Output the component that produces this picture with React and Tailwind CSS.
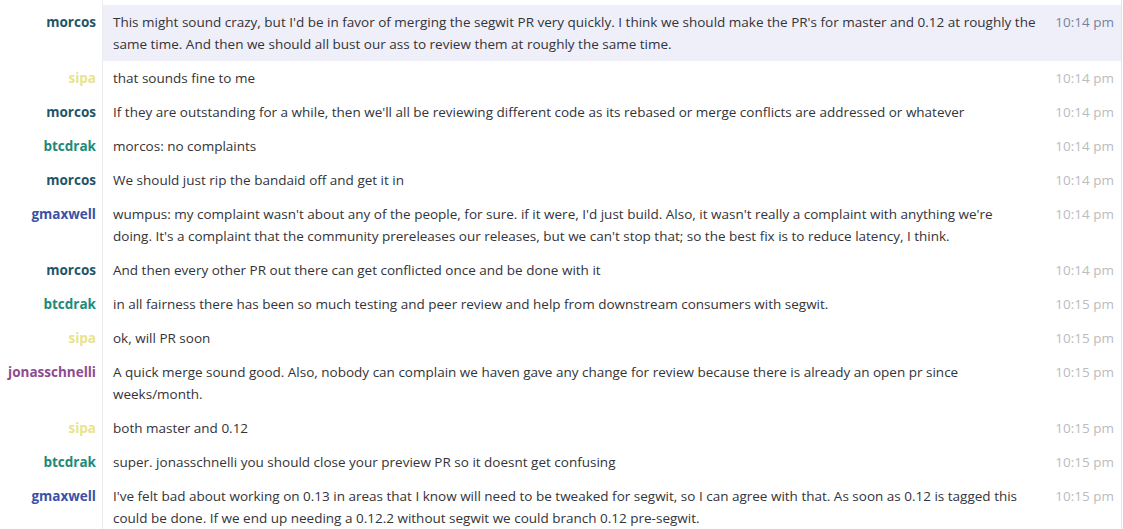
import React from "react";

const NAME_COLORS = {
  morcos: "text-[#1f5568]",
  sipa: "text-[#e8e48c]",
  btcdrak: "text-[#21897a]",
  gmaxwell: "text-[#3a52a6]",
  jonasschnelli: "text-[#8d4b92]",
};

const MESSAGES = [
  { nick: "morcos", time: "10:14 pm", hl: true, text: "This might sound crazy, but I'd be in favor of merging the segwit PR very quickly. I think we should make the PR's for master and 0.12 at roughly the same time. And then we should all bust our ass to review them at roughly the same time." },
  { nick: "sipa", time: "10:14 pm", text: "that sounds fine to me" },
  { nick: "morcos", time: "10:14 pm", text: "If they are outstanding for a while, then we'll all be reviewing different code as its rebased or merge conflicts are addressed or whatever" },
  { nick: "btcdrak", time: "10:14 pm", text: "morcos: no complaints" },
  { nick: "morcos", time: "10:14 pm", text: "We should just rip the bandaid off and get it in" },
  { nick: "gmaxwell", time: "10:14 pm", text: ["wumpus: my complaint wasn't about any of the people, for sure. if it were, I'd just build. Also, it wasn't really a complaint with anything we're", "doing. It's a complaint that the community prereleases our releases, but we can't stop that; so the best fix is to reduce latency, I think."] },
  { nick: "morcos", time: "10:14 pm", text: "And then every other PR out there can get conflicted once and be done with it" },
  { nick: "btcdrak", time: "10:15 pm", text: "in all fairness there has been so much testing and peer review and help from downstream consumers with segwit." },
  { nick: "sipa", time: "10:15 pm", text: "ok, will PR soon" },
  { nick: "jonasschnelli", time: "10:15 pm", text: "A quick merge sound good. Also, nobody can complain we haven gave any change for review because there is already an open pr since weeks/month." },
  { nick: "sipa", time: "10:15 pm", text: "both master and 0.12" },
  { nick: "btcdrak", time: "10:15 pm", text: "super. jonasschnelli you should close your preview PR so it doesnt get confusing" },
  { nick: "gmaxwell", time: "10:15 pm", text: "I've felt bad about working on 0.13 in areas that I know will need to be tweaked for segwit, so I can agree with that. As soon as 0.12 is tagged this could be done. If we end up needing a 0.12.2 without segwit we could branch 0.12 pre-segwit." },
];

function Row({ nick, time, text, hl }) {
  const lines = Array.isArray(text) ? text : [text];
  return (
    <div className={`flex ${hl ? "bg-[#efeff9]" : ""}`}>
      <div className={`w-[103px] shrink-0 border-r border-[#ececec] pr-[6px] py-[6px] text-right font-bold ${NAME_COLORS[nick]} ${hl ? "bg-white" : ""}`}>
        {nick}
      </div>
      <div className="flex-1 min-w-0 pl-[10px] py-[6px] text-[#333338]">
        {lines.map((l, i) => (
          <React.Fragment key={i}>
            {i > 0 && <br />}
            {l}
          </React.Fragment>
        ))}
      </div>
      <div className={`w-[80px] shrink-0 py-[6px] pr-[7px] text-right ${hl ? "text-[#76849a]" : "text-[#bcbcbc]"}`}>
        {time}
      </div>
    </div>
  );
}

export default function App() {
  return (
    <div className="w-[1122px] h-[529px] overflow-hidden bg-white border-r border-[#e4e4e4] text-[13.5px] leading-[22px]" style={{ fontFamily: '"Open Sans", "Noto Sans", sans-serif' }}>
      <div className="flex h-[5px]">
        <div className="w-[103px] border-r border-[#ececec]" />
      </div>
      {MESSAGES.map((m, i) => (
        <Row key={i} {...m} />
      ))}
      <div className="flex h-[60px]">
        <div className="w-[103px] border-r border-[#ececec]" />
      </div>
    </div>
  );
}
